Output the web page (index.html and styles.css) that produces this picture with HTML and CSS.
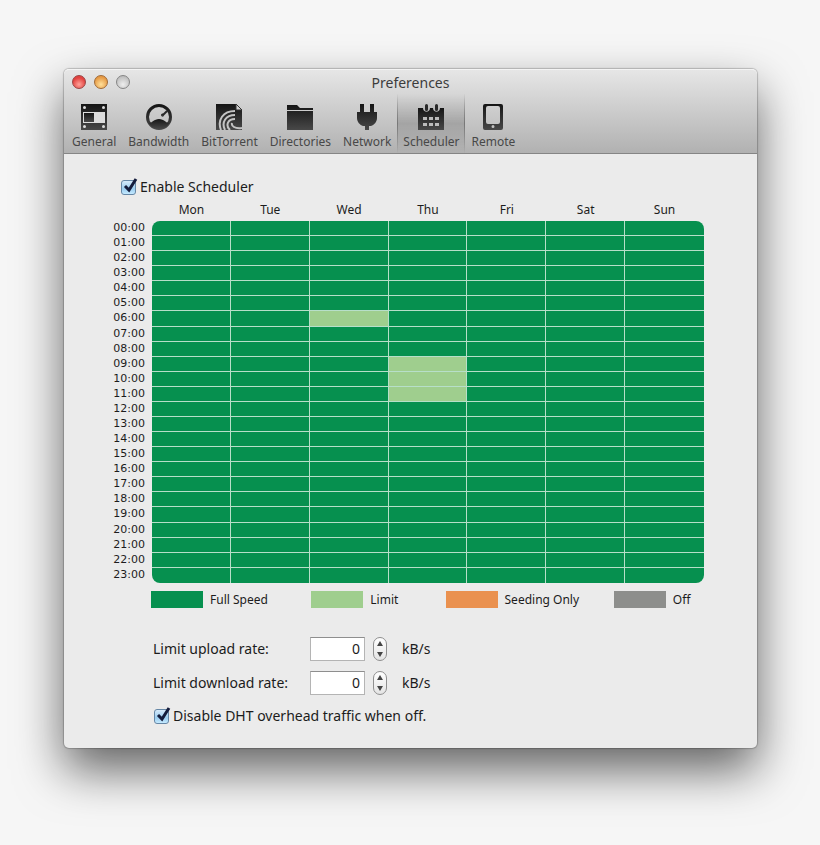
FILE: index.html
```html
<!DOCTYPE html>
<html lang="en">

<head>
    <meta charset="utf-8">
    <title>Preferences</title>
    <link rel="stylesheet" href="styles.css">
</head>

<body>
    <main class="window">
        <header class="toolbar">
            <div class="titlebar">
                <div class="lights">
                    <button class="light red" aria-label="Close"></button>
                    <button class="light amber" aria-label="Minimize"></button>
                    <button class="light gray" aria-label="Zoom"></button>
                </div>
                <h1>Preferences</h1>
            </div>
            <nav class="tabs">
                <button class="tab">
                    <svg viewBox="0 0 26 26"><path d="M0 0h26v26H0z"/><path d="M2 8h22v11H2z" fill="#ddd"/><path d="M3 9h10v9H3z"/><g fill="#ddd"><circle cx="3.5" cy="3.5" r="1.5"/><circle cx="22.5" cy="3.5" r="1.5"/><circle cx="3.5" cy="22.5" r="1.5"/><circle cx="22.5" cy="22.5" r="1.5"/></g></svg>
                    General
                </button>
                <button class="tab">
                    <svg viewBox="0 0 26 26"><circle cx="13" cy="13" r="11.5" fill="none" stroke="url(#ink)" stroke-width="3"/><path d="M3 19c3 0 5-4 10-4s7 4 10 4c-2 4-6 6-10 6s-8-2-10-6z"/><path d="M16 12l5-5" fill="none" stroke="#2a2a2a" stroke-width="2"/><circle cx="16.5" cy="11" r="1.5"/></svg>
                    Bandwidth
                </button>
                <button class="tab">
                    <svg viewBox="0 0 26 26"><path d="M0 0h20l6 6v20H0z"/><path d="M20 0v6h6z" fill="#ccc" stroke="#333" stroke-width="1"/><g fill="none" stroke="#c4c4c4" stroke-width="2"><path d="M5 26C1 16 7 7 19 7"/><path d="M9 26C5 18 10 11 19 11"/><path d="M14 26C9 21 12 15 19 15"/><path d="M26 24C19 25 15 22 16 19"/></g></svg>
                    BitTorrent
                </button>
                <button class="tab">
                    <svg viewBox="0 0 26 26"><path d="M0 1h10l3 3h13v2H0zM0 7h26v19H0z"/></svg>
                    Directories
                </button>
                <button class="tab">
                    <svg viewBox="0 0 26 26"><path d="M6 0h4v8h6V0h4v8h3v6c0 4-3 7-6 8h-2v4h-4v-4H9c-3-1-6-4-6-8V8h3z"/></svg>
                    Network
                </button>
                <button class="tab active">
                    <svg viewBox="0 0 26 26"><path d="M0 4h5c0 5 7 5 7 0h3c0 5 7 5 7 0h4v22H0z"/><path d="M8.500 1.500v4M18.500 1.500v4" fill="none" stroke="#2a2a2a" stroke-width="3" stroke-linecap="round"/><path fill="#bbb" d="M5 13h4v3H5zM11 13h4v3h-4zM17 13h4v3h-4zM5 19h4v3H5zM11 19h4v3h-4zM17 19h4v3h-4z"/></svg>
                    Scheduler
                </button>
                <button class="tab">
                    <svg viewBox="0 0 26 26"><path fill-rule="evenodd" d="M5 0h16q2 0 2 2v22q0 2-2 2H5q-2 0-2-2V2q0-2 2-2zM8 2Q6 2 6 4v14q0 2 2 2h10q2 0 2-2V4q0-2-2-2zM13 21a1.500 1.500 0 1 0 0 3a1.500 1.500 0 1 0 0-3z"/></svg>
                    Remote
                </button>
            </nav>
        </header>

        <section class="content">
            <label class="check enable">
                <span class="box">
                    <input type="checkbox" checked>
                    <svg viewBox="0 0 18 18"><path d="M5 8l4 4 7-11"/></svg>
                </span>
                Enable Scheduler
            </label>

            <table class="schedule">
                <thead>
                    <tr>
                        <th class="hour"></th>
                        <th>Mon</th>
                        <th>Tue</th>
                        <th>Wed</th>
                        <th>Thu</th>
                        <th>Fri</th>
                        <th>Sat</th>
                        <th>Sun</th>
                    </tr>
                </thead>
                <tbody id="hours"></tbody>
            </table>

            <ul class="legend">
                <li><span class="swatch full"></span>Full Speed</li>
                <li><span class="swatch limit"></span>Limit</li>
                <li><span class="swatch seeding"></span>Seeding Only</li>
                <li><span class="swatch off"></span>Off</li>
            </ul>

            <form class="limits">
                <div class="row">
                    <label for="upload">Limit upload rate:</label>
                    <input type="number" id="upload" value="0" min="0">
                    <span class="stepper">
                        <button type="button" data-for="upload" data-step="1" aria-label="Increase upload rate"><svg viewBox="0 0 6 5"><path d="M3 0l3 5H0z"/></svg></button>
                        <button type="button" data-for="upload" data-step="-1" aria-label="Decrease upload rate"><svg viewBox="0 0 6 5"><path d="M3 5l3-5H0z"/></svg></button>
                    </span>
                    <span>kB/s</span>
                </div>
                <div class="row">
                    <label for="download">Limit download rate:</label>
                    <input type="number" id="download" value="0" min="0">
                    <span class="stepper">
                        <button type="button" data-for="download" data-step="1" aria-label="Increase download rate"><svg viewBox="0 0 6 5"><path d="M3 0l3 5H0z"/></svg></button>
                        <button type="button" data-for="download" data-step="-1" aria-label="Decrease download rate"><svg viewBox="0 0 6 5"><path d="M3 5l3-5H0z"/></svg></button>
                    </span>
                    <span>kB/s</span>
                </div>
                <label class="check">
                    <span class="box">
                        <input type="checkbox" checked>
                        <svg viewBox="0 0 18 18"><path d="M5 8l4 4 7-11"/></svg>
                    </span>
                    Disable DHT overhead traffic when off.
                </label>
            </form>
        </section>
    </main>

    <!-- Shared gradient for the toolbar icons -->
    <svg class="defs" width="0" height="0">
        <linearGradient id="ink" x1="0" y1="0" x2="0" y2="1">
            <stop offset="0" stop-color="#151515"/>
            <stop offset="1" stop-color="#484848"/>
        </linearGradient>
    </svg>

    <script src="script.js"></script>
</body>

</html>
```
FILE: styles.css
```css
* {
    box-sizing: border-box;
}

body {
    margin: 0;
    padding: 69px 63px 96px 64px;
    background-color: #f6f6f6;
    color: #1c1c1c;
    font-family: "Noto Sans", "Open Sans", sans-serif;
    font-size: 14px;
}

button {
    margin: 0;
    padding: 0;
    border: none;
    background: none;
    color: inherit;
    font: inherit;
}

.window {
    border-radius: 5px;
    background-color: #ebebeb;
    box-shadow: 0 0 1px 1px rgba(0, 0, 0, 0.2), 0 22px 48px rgba(0, 0, 0, 0.6);
}

/* Title bar and toolbar */
.toolbar {
    border-top: 1px solid #f4f4f4;
    border-bottom: 1px solid #858585;
    border-radius: 5px 5px 0 0;
    background: linear-gradient(#e6e6e6, #b1b1b1);
}

.titlebar {
    display: grid;
    grid-template-columns: 1fr auto 1fr;
    align-items: center;
    height: 24px;
    padding: 0 8px;
}

.titlebar h1 {
    margin: 0;
    color: #3c3c3c;
    font-size: 14px;
    font-weight: normal;
}

.lights {
    display: flex;
    gap: 8px;
}

.light {
    width: 14px;
    height: 14px;
    border: 1px solid #858585;
    border-radius: 50%;
}

.red {
    border-color: #944;
    background: radial-gradient(circle at 50% 70%, #ffa39b, #e2423f 65%);
}

.amber {
    border-color: #a06a36;
    background: radial-gradient(circle at 50% 70%, #ffe09a, #e69a45 70%);
}

.gray {
    background: radial-gradient(circle at 50% 70%, #eee, #bbb 80%);
}

.tabs {
    display: flex;
    padding-left: 2px;
}

.tab {
    display: flex;
    flex-direction: column;
    align-items: center;
    gap: 3px;
    height: 59px;
    padding: 10px 5px 0;
    border: solid transparent;
    border-width: 0 1px;
    color: #484848;
    font-size: 12px;
    line-height: 18px;
}

.tab svg {
    width: 26px;
    height: 26px;
    fill: url(#ink);
}

.tab.active {
    border-image: linear-gradient(transparent, #777 50%, transparent) 1;
    border-width: 0 1px;
    background: linear-gradient(transparent, rgba(0, 0, 0, 0.16) 50%, transparent);
}

.content {
    padding: 23px 53px 22px 45px;
}

/* Check boxes */
.check {
    display: flex;
    align-items: center;
    gap: 2px;
    line-height: 20px;
}

.enable {
    padding-left: 11px;
}

.box {
    position: relative;
    width: 18px;
    height: 18px;
}

.box input {
    appearance: none;
    display: block;
    width: 15px;
    height: 15px;
    margin: 2px 1px;
    border: 1px solid #6687a6;
    border-radius: 3px;
    background: linear-gradient(#d6eafa, #9bcdf0 60%, #c5eaff);
}

.box svg {
    position: absolute;
    inset: 0;
    fill: none;
    stroke: #141c3c;
    stroke-width: 3;
    pointer-events: none;
}

.box input:not(:checked) + svg {
    display: none;
}

/* Week grid */
.schedule {
    width: 100%;
    height: 381px;
    margin-top: 5px;
    border-spacing: 0;
    table-layout: fixed;
    font-size: 12px;
    line-height: 14px;
}

.schedule th {
    padding: 0;
    font-weight: normal;
}

.schedule thead th {
    height: 19px;
    padding-bottom: 3px;
}

.schedule .hour {
    width: 43px;
    padding-right: 7px;
    text-align: right;
    font-family: "DejaVu Sans", sans-serif;
    font-size: 11px;
    line-height: 13px;
    vertical-align: top;
}

.schedule td {
    height: 15px;
    padding: 0;
    border: solid #b7dfc9;
    border-width: 0 1px 1px 0;
}

.schedule td:last-child {
    border-right: none;
}

.schedule tbody tr:last-child td {
    border-bottom: none;
}

.schedule tbody tr:first-child td:nth-child(2) {
    border-top-left-radius: 8px;
}

.schedule tbody tr:first-child td:last-child {
    border-top-right-radius: 8px;
}

.schedule tbody tr:last-child td:nth-child(2) {
    border-bottom-left-radius: 8px;
}

.schedule tbody tr:last-child td:last-child {
    border-bottom-right-radius: 8px;
}

.full {
    background-color: #06904f;
}

.limit {
    background-color: #9fce8e;
}

.seeding {
    background-color: #ea914f;
}

.off {
    background-color: #8d8e8c;
}

.legend {
    display: grid;
    grid-template-columns: 160fr 134fr 168fr 90fr;
    margin: 8px 0 0 42px;
    padding: 0;
    list-style: none;
    font-size: 12px;
    line-height: 17px;
}

.legend li {
    display: flex;
    gap: 7px;
}

.swatch {
    width: 52px;
    height: 17px;
}

/* Speed limits */
.limits {
    display: flex;
    flex-direction: column;
    gap: 9px;
    margin: 28px 0 0 44px;
}

.limits .check {
    margin-top: 2px;
}

.row {
    display: grid;
    grid-template-columns: 149px 55px 14px auto;
    column-gap: 8px;
    align-items: center;
    height: 25px;
}

.row input {
    appearance: textfield;
    width: 100%;
    height: 24px;
    padding: 0 4px;
    border: 1px solid #b4b4b4;
    border-top-color: #8e8e8e;
    background-color: #fff;
    color: inherit;
    font: inherit;
    text-align: right;
}

.row input::-webkit-inner-spin-button {
    display: none;
}

.row > span:last-child {
    padding-left: 7px;
}

.stepper {
    display: flex;
    flex-direction: column;
    height: 24px;
    border: 1px solid #8f8f8f;
    border-radius: 7px;
    background: linear-gradient(#fff, #e4e4e4);
}

.stepper button {
    display: flex;
    flex: 1;
    align-items: center;
    justify-content: center;
}

.stepper svg {
    width: 6px;
    height: 5px;
    fill: #444;
}

.defs {
    position: absolute;
}
```
FILE: script.js
```javascript
var modes = ['full', 'limit', 'seeding', 'off'];

// Hours that do not run at full speed, as "day-hour"
var schedule = {
    '2-6': 'limit',
    '3-9': 'limit',
    '3-10': 'limit',
    '3-11': 'limit'
};

var hours = document.getElementById('hours');

for (var hour = 0; hour < 24; hour++) {
    var row = document.createElement('tr');
    var label = document.createElement('th');
    label.className = 'hour';
    label.textContent = String(hour).padStart(2, '0') + ':00';
    row.appendChild(label);

    for (var day = 0; day < 7; day++) {
        var cell = document.createElement('td');
        cell.className = schedule[day + '-' + hour] || 'full';
        row.appendChild(cell);
    }
    hours.appendChild(row);
}

// Clicking an hour moves it to the next mode
hours.addEventListener('click', function (e) {
    if (e.target.tagName === 'TD') {
        var next = (modes.indexOf(e.target.className) + 1) % modes.length;
        e.target.className = modes[next];
    }
});

document.querySelectorAll('.stepper button').forEach(function (button) {
    button.addEventListener('click', function () {
        var input = document.getElementById(button.dataset.for);
        input.value = Math.max(0, Number(input.value) + Number(button.dataset.step));
    });
});
```
